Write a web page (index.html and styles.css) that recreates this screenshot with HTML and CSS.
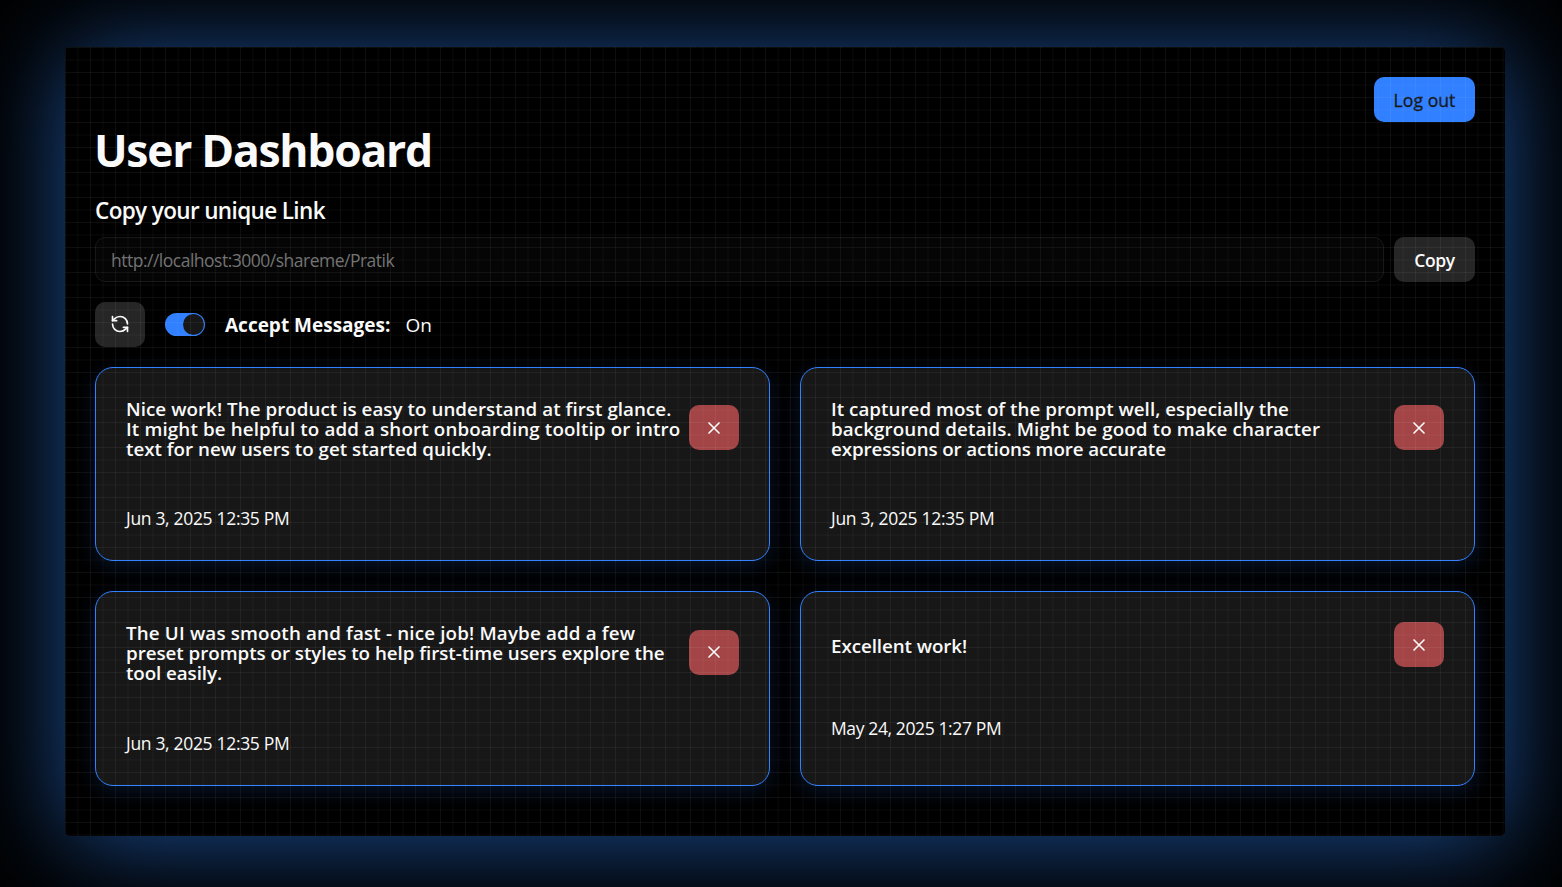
FILE: index.html
```html
<!DOCTYPE html>
<html lang="en">
<head>
<meta charset="utf-8">
<title>User Dashboard</title>
<link rel="stylesheet" href="styles.css">
</head>
<body>
<main class="panel">
  <header class="topbar"><button class="btn btn-primary">Log out</button></header>
  <h1 class="title">User Dashboard</h1>
  <h2 class="subtitle">Copy your unique Link</h2>
  <div class="link-row">
    <div class="link-input">http://localhost:3000/shareme/Pratik</div>
    <button class="btn btn-secondary">Copy</button>
  </div>
  <div class="controls">
    <button class="btn btn-icon" aria-label="Refresh"><svg class="icon" viewBox="0 0 24 24"><path d="M21 12a9 9 0 0 0-9-9 9.75 9.75 0 0 0-6.74 2.74L3 8"/><path d="M3 3v5h5"/><path d="M3 12a9 9 0 0 0 9 9 9.75 9.75 0 0 0 6.74-2.74L21 16"/><path d="M16 16h5v5"/></svg></button>
    <div class="switch"><div class="thumb"></div></div>
    <div class="status"><strong>Accept Messages:</strong><span>On</span></div>
  </div>
  <section class="cards">
    <article class="card">
      <div class="card-head raised"><h3 class="message"><span class="m1">Nice work! The product is easy to understand at first glance.</span><span class="m2">It might be helpful to add a short onboarding tooltip or intro</span><span class="m3">text for new users to get started quickly.</span></h3>
      <button class="btn btn-delete" aria-label="Delete"><svg class="icon" viewBox="0 0 24 24"><path d="M18 6 6 18M6 6l12 12"/></svg></button></div>
      <time class="date">Jun 3, 2025 12:35 PM</time>
    </article>
    <article class="card">
      <div class="card-head raised"><h3 class="message"><span class="m4">It captured most of the prompt well, especially the</span><span class="m5">background details. Might be good to make character</span><span class="m6">expressions or actions more accurate</span></h3>
      <button class="btn btn-delete" aria-label="Delete"><svg class="icon" viewBox="0 0 24 24"><path d="M18 6 6 18M6 6l12 12"/></svg></button></div>
      <time class="date">Jun 3, 2025 12:35 PM</time>
    </article>
    <article class="card">
      <div class="card-head"><h3 class="message"><span class="m7">The UI was smooth and fast - nice job! Maybe add a few</span><span class="m8">preset prompts or styles to help first-time users explore the</span><span class="m9">tool easily.</span></h3>
      <button class="btn btn-delete" aria-label="Delete"><svg class="icon" viewBox="0 0 24 24"><path d="M18 6 6 18M6 6l12 12"/></svg></button></div>
      <time class="date date-low">Jun 3, 2025 12:35 PM</time>
    </article>
    <article class="card">
      <div class="card-head card-head-short"><h3 class="message"><span class="m10">Excellent work!</span></h3>
      <button class="btn btn-delete" aria-label="Delete"><svg class="icon" viewBox="0 0 24 24"><path d="M18 6 6 18M6 6l12 12"/></svg></button></div>
      <time class="date date-may">May 24, 2025 1:27 PM</time>
    </article>
  </section>
  <div class="grid-overlay"></div>
</main>
</body>
</html>
```
FILE: styles.css
```css
* { box-sizing: border-box; }
body {
  margin: 0;
  height: 887px;
  padding: 47px 57px 51px 65px;
  overflow: hidden;
  background: #000;
  color: #fafafa;
  font-family: "Open Sans", "Noto Sans", sans-serif;
}
.panel {
  position: relative;
  height: 789px;
  padding: 30px;
  border-radius: 5px;
  background: #000;
  box-shadow: 0 5px 100px rgba(48, 132, 246, 0.6);
  white-space: nowrap;
}
.grid-overlay {
  position: absolute;
  inset: 0;
  border-radius: 5px;
  pointer-events: none;
  background-image:
    linear-gradient(90deg, rgba(255,255,255,.055) 1px, transparent 1px, transparent 12px, rgba(255,255,255,.02) 12px, rgba(255,255,255,.02) 14px, transparent 14px),
    linear-gradient(rgba(255,255,255,.055) 1px, transparent 1px, transparent 12px, rgba(255,255,255,.02) 12px, rgba(255,255,255,.02) 14px, transparent 14px);
  background-size: 25px 25px;
}
.topbar { display: flex; justify-content: flex-end; height: 45px; }
.btn {
  display: flex;
  flex: none;
  align-items: center;
  justify-content: center;
  height: 45px;
  padding: 2px 0 0;
  border: 0;
  border-radius: 10px;
  color: #fafafa;
  font: 600 17.5px/25px "Open Sans", sans-serif;
}
.btn-primary { width: 101px; background: #3080ff; color: #171717; font-weight: 500; letter-spacing: 0.1px; -webkit-text-stroke: 0.3px #171717; }
.btn-secondary { width: 81px; background: #262626; letter-spacing: -0.4px; }
.btn-icon { width: 50px; padding: 0 0 1px; background: #262626; }
.btn-delete { width: 50px; padding: 0; background: #a34547; }
.icon { width: 20px; height: 20px; fill: none; stroke: #fafafa; stroke-width: 2; stroke-linecap: round; stroke-linejoin: round; }
.title { margin: 0 0 0 -1px; height: 50px; font-size: 44.5px; line-height: 56px; font-weight: 700; letter-spacing: -1.3px; }
.subtitle { margin: 20px 0 10px; height: 35px; font-size: 22.5px; line-height: 37px; font-weight: 600; letter-spacing: -0.63px; }
.link-row { display: flex; gap: 10px; }
.link-input {
  flex: 1;
  height: 45px;
  padding: 0 15px;
  border: 1px solid #171717;
  border-radius: 10px;
  background: #050505;
  color: #737373;
  font-size: 17.5px;
  line-height: 45px;
  letter-spacing: -0.5px;
}
.controls { display: flex; align-items: center; gap: 20px; height: 45px; margin: 20px 0; }
.switch { display: flex; justify-content: flex-end; width: 40px; height: 23px; padding: 1px; border-radius: 12px; background: #3080ff; }
.thumb { width: 21px; height: 21px; border-radius: 50%; background: #171717; }
.status { display: flex; gap: 15px; font-size: 19px; line-height: 30px; }
.status strong { font-weight: 700; letter-spacing: 0; }
.cards { display: grid; grid-template-columns: 675px 675px; grid-template-rows: 194px 195px; gap: 30px; }
.card {
  padding: 30px;
  border: 1px solid #3080ff;
  border-radius: 18px;
  background: #171717;
  box-shadow: 0 5px 20px rgba(43, 127, 255, 0.17);
}
.card-head { display: flex; align-items: center; justify-content: space-between; height: 60px; }
.message { width: 558px; margin: 0; font-size: 18.75px; line-height: 20px; font-weight: 600; padding-top: 1px; }
.message span { display: block; }
.m1 { letter-spacing: 0.05px; }
.m2 { letter-spacing: 0.14px; }
.m3 { letter-spacing: 0; }
.m4 { letter-spacing: 0.03px; }
.m5 { letter-spacing: 0.12px; }
.m6 { letter-spacing: -0.11px; }
.m7 { letter-spacing: 0.17px; }
.m8 { letter-spacing: -0.03px; }
.m9, .m10 { letter-spacing: -0.07px; }
.raised .btn-delete { margin-top: -1px; }
.card-head-short { height: 45px; }
.card-head-short .message { padding-top: 3px; }
.date { display: block; height: 25px; margin-top: 48px; font-size: 17.5px; line-height: 25px; letter-spacing: -0.32px; }
.date-low { margin-top: 49px; }
.date-may { margin-top: 49px; letter-spacing: -0.38px; }
```
